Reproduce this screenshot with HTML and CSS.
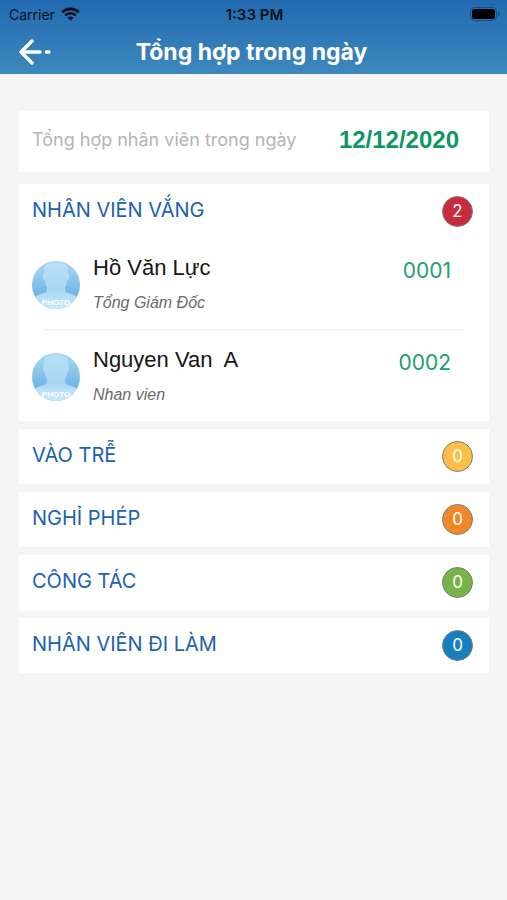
FILE: index.html
```html
<!DOCTYPE html>
<html lang="vi">
<head>
    <meta charset="UTF-8">
    <meta name="viewport" content="width=device-width, initial-scale=1.0">
    <title>Tổng hợp trong ngày</title>
    <link rel="stylesheet" href="styles.css">
</head>
<body>

<!-- avatar shared by the employee rows -->
<svg width="0" height="0" class="defs" aria-hidden="true">
    <defs>
        <linearGradient id="avatar-bg" x1="0" y1="0" x2="0" y2="1">
            <stop offset="0" stop-color="#a9d8f4"/>
            <stop offset="0.65" stop-color="#74b9e6"/>
        </linearGradient>
        <linearGradient id="avatar-body" x1="0" y1="0" x2="0" y2="1">
            <stop offset="0" stop-color="#b9e0f6"/>
            <stop offset="0.6" stop-color="#a8d7f3"/>
            <stop offset="1" stop-color="#cdeafa"/>
        </linearGradient>
        <clipPath id="avatar-clip"><circle cx="24" cy="24" r="24"/></clipPath>
    </defs>
    <symbol id="avatar" viewBox="0 0 48 48">
        <g clip-path="url(#avatar-clip)">
            <rect width="48" height="48" fill="url(#avatar-bg)"/>
            <path fill="url(#avatar-body)" d="M12 8C12 4 17 2 24 2s12 2 12 6v5c2 1 1 6-1 7 0 3-1 5-2 6v3c0 2 3 3 6 4 5 1 9 5 10 15H-1c1-10 5-14 10-15 3-1 6-2 6-4v-3c-1-1-2-3-2-6-2-1-3-6-1-7z"/>
        </g>
    </symbol>
</svg>

<header class="header">
    <div class="status-bar">
        <div class="carrier">
            <span>Carrier</span>
            <svg width="19" height="14" viewBox="0 0 19 14" fill="none" stroke="#06111c" stroke-width="2.6">
                <path d="M1.2 5.2a12 12 0 0 1 16.6 0"/>
                <path d="M4.2 8.4a7.6 7.6 0 0 1 10.6 0"/>
                <path d="M9.5 13.8L6.6 10.8a4.2 4.2 0 0 1 5.8 0z" fill="#06111c" stroke="none"/>
            </svg>
        </div>
        <time class="clock">1:33 PM</time>
        <svg class="battery" width="30" height="14" viewBox="0 0 30 14">
            <rect x="0.5" y="0.5" width="26" height="13" rx="4" fill="none" stroke="#1d4a78"/>
            <rect x="2" y="2" width="23" height="10" rx="2.5" fill="#000"/>
            <path d="M28 5v4q1.500-.5 1.500-2t-1.500-2z" fill="#1d4a78"/>
        </svg>
    </div>
    <div class="nav-bar">
        <button class="back" type="button" aria-label="Quay lại">
            <svg width="34" height="26" viewBox="0 0 34 26" fill="none" stroke="#fff" stroke-width="3.400" stroke-linecap="round" stroke-linejoin="round">
                <path d="M14 2L3 13l11 11M3 13h19M28.500 13h2.500"/>
            </svg>
        </button>
        <h1>Tổng hợp trong ngày</h1>
    </div>
</header>

<main class="container">
    <div class="card summary">
        <span class="summary-label">Tổng hợp nhân viên trong ngày</span>
        <time class="summary-date" datetime="2020-12-12">12/12/2020</time>
    </div>

    <section class="card">
        <button class="group" type="button">
            <span>NHÂN VIÊN VẮNG</span>
            <span class="badge red">2</span>
        </button>
        <ul class="employees">
            <li class="employee">
                <div class="avatar">
                    <svg width="48" height="48"><use href="#avatar"/></svg>
                    <span class="avatar-text">PHOTO</span>
                </div>
                <div class="info">
                    <div class="name">Hồ Văn Lực</div>
                    <div class="position">Tổng Giám Đốc</div>
                </div>
                <div class="code">0001</div>
            </li>
            <li class="employee">
                <div class="avatar">
                    <svg width="48" height="48"><use href="#avatar"/></svg>
                    <span class="avatar-text">PHOTO</span>
                </div>
                <div class="info">
                    <div class="name">Nguyen Van&nbsp; A</div>
                    <div class="position">Nhan vien</div>
                </div>
                <div class="code">0002</div>
            </li>
        </ul>
    </section>

    <section class="card">
        <button class="group" type="button">
            <span>VÀO TRỄ</span>
            <span class="badge yellow">0</span>
        </button>
    </section>

    <section class="card">
        <button class="group" type="button">
            <span>NGHỈ PHÉP</span>
            <span class="badge orange">0</span>
        </button>
    </section>

    <section class="card">
        <button class="group" type="button">
            <span>CÔNG TÁC</span>
            <span class="badge green">0</span>
        </button>
    </section>

    <section class="card">
        <button class="group" type="button">
            <span>NHÂN VIÊN ĐI LÀM</span>
            <span class="badge blue">0</span>
        </button>
    </section>
</main>

</body>
</html>
```
FILE: styles.css
```css
* {
    box-sizing: border-box;
}

body {
    margin: 0;
    background-color: #f5f5f5;
    font-family: Inter, "Liberation Sans", sans-serif;
}

.defs {
    position: absolute;
}

/* Header */
.header {
    background: linear-gradient(#216ab1, #3e88bd);
}

.status-bar {
    display: grid;
    grid-template-columns: 1fr auto 1fr;
    align-items: center;
    height: 28px;
    padding: 0 7px 0 9px;
    font-size: 14px;
    color: #06111c;
}

.carrier {
    display: flex;
    align-items: center;
    gap: 6px;
}

.clock {
    font-size: 15px;
    font-weight: 600;
}

.battery {
    justify-self: end;
}

.nav-bar {
    display: grid;
    grid-template-columns: 1fr auto 1fr;
    align-items: center;
    height: 46px;
    padding: 2px 22px 0 18px;
}

.back {
    justify-self: start;
    display: flex;
    padding: 0;
    border: none;
    background: none;
    cursor: pointer;
}

h1 {
    margin: 0;
    font-size: 23px;
    font-weight: 700;
    color: #fff;
}

/* Cards */
.container {
    display: flex;
    flex-direction: column;
    gap: 8px;
    padding: 37px 18px 24px 19px;
}

.card {
    background-color: #fff;
}

.summary {
    display: flex;
    align-items: center;
    justify-content: space-between;
    height: 61px;
    margin-bottom: 4px;
    padding: 0 30px 4px 13px;
}

.summary-label {
    font-size: 18px;
    color: #b4b4b4;
}

.summary-date {
    font-family: "Liberation Sans", Arial, sans-serif;
    font-size: 24px;
    font-weight: bold;
    color: #0f9663;
}

.group {
    display: flex;
    align-items: center;
    justify-content: space-between;
    width: 100%;
    height: 55px;
    padding: 0 16px 0 13px;
    border: none;
    background: none;
    font-family: inherit;
    font-size: 20px;
    line-height: 26px;
    color: #1c62ae;
    cursor: pointer;
}

.group > span:first-child {
    padding-bottom: 4px;
}

.badge {
    width: 31px;
    height: 31px;
    border: 1px solid #7d7d78;
    border-radius: 50%;
    font-size: 17px;
    line-height: 29px;
    text-align: center;
    color: #fff;
}

.red {
    background-color: #c82b3d;
}

.yellow {
    background-color: #fdbf45;
}

.orange {
    background-color: #f08829;
}

.green {
    background-color: #76b349;
}

.blue {
    background-color: #187fbe;
}

/* Employees */
.employees {
    margin: 0;
    padding: 0 24px 0 13px;
    list-style: none;
}

.employee {
    display: flex;
    align-items: flex-start;
    gap: 13px;
    padding: 16px 0;
}

.employee + .employee {
    padding-top: 18px;
    background: linear-gradient(#f5f5f5, #f5f5f5) 12px 0 / 100% 2px no-repeat;
}

.avatar {
    position: relative;
    flex: none;
    width: 48px;
    height: 48px;
    margin-top: 6px;
}

.avatar-text {
    position: absolute;
    bottom: 1px;
    left: 0;
    width: 100%;
    font-family: "Liberation Sans", Arial, sans-serif;
    font-size: 8px;
    line-height: 10px;
    font-weight: bold;
    text-align: center;
    color: #fff;
}

.info {
    flex: 1;
    font-family: "Liberation Sans", Arial, sans-serif;
}

.name {
    font-size: 22px;
    line-height: 26px;
    color: #161616;
}

.position {
    margin-top: 12px;
    font-size: 16px;
    line-height: 20px;
    font-style: italic;
    color: #6b6b6b;
}

.code {
    padding-right: 14px;
    font-size: 21px;
    line-height: 32px;
    color: #21a06f;
}
```
